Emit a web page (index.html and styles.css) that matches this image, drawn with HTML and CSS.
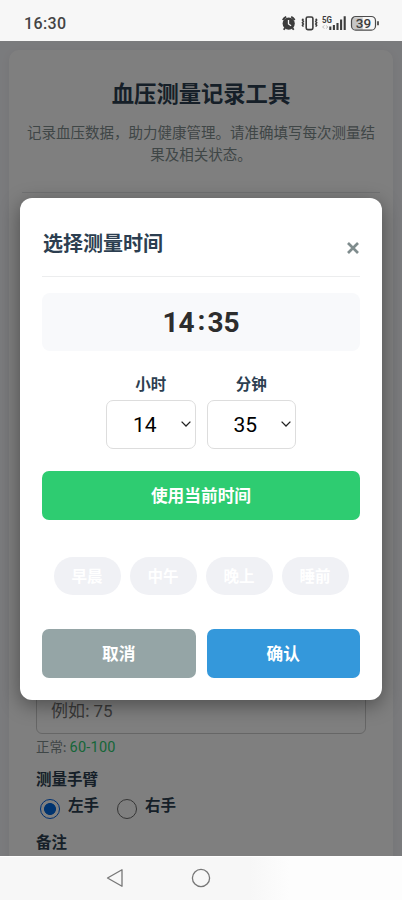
FILE: index.html
```html
<!DOCTYPE html>
<html lang="zh-CN">
<head>
<meta charset="utf-8">
<meta name="viewport" content="width=device-width, initial-scale=1">
<title>血压测量记录工具</title>
<link rel="stylesheet" href="styles.css">
</head>
<body>
<div class="phone">
  <header class="status">
    <span class="clock">16:30</span>
    <svg class="status-icons" width="98" height="18" viewBox="0 0 98 18">
      <g fill="#3c3c3c" stroke="none">
        <circle cx="7.700" cy="9.600" r="6.100"/>
        <path d="M1 5.600A7.500 7.500 0 0 1 4.700 2l1 1.300L2.300 6.600zM14.400 5.600A7.500 7.500 0 0 0 10.700 2l-1 1.300 3.400 3.300zM3.200 13.500l1.600 1.200-1.500 1.500-1.300-1zM12.200 13.500l-1.600 1.200 1.500 1.500 1.300-1z"/>
      </g>
      <path d="M7.500 6v4l2.600 1.700" fill="none" stroke="#f7f7f7" stroke-width="1.300"/>
      <rect x="25.200" y="3" width="6.700" height="12.600" rx="1.600" fill="none" stroke="#3c3c3c" stroke-width="1.600"/>
      <path d="M22.400 4.700l-1 1.300 1 1.300-1 1.400 1 1.300-1 1.300 1 1.300M34.700 4.700l1 1.300-1 1.300 1 1.400-1 1.300 1 1.300-1 1.300" fill="none" stroke="#3c3c3c" stroke-width="1.500"/>
      <text class="net" x="41" y="8.800" textLength="10" lengthAdjust="spacingAndGlyphs">5G</text>
      <path d="M43.500 11.500l-2 1.500 2 1.500M45 11.500l2 1.500-2 1.500" fill="none" stroke="#c4c4c4" stroke-width="1"/>
      <path d="M49.300 16v-3.600M52.900 16v-5M56.500 16V8.900M60.100 16V5.600M63.700 16V2.300" stroke="#3c3c3c" stroke-width="2.100"/>
      <path d="M74.700 3.200h7v12.600h-7a4 4 0 0 1-4-4V7.200a4 4 0 0 1 4-4z" fill="#c6c6c6"/>
      <rect x="70.500" y="2.500" width="24" height="13.600" rx="4.200" fill="none" stroke="#4c4c4c" stroke-width="1.200"/>
      <path d="M97 7.300v4" stroke="#4c4c4c" stroke-width="1.800"/>
      <text class="battery" x="82.500" y="13.800" text-anchor="middle">39</text>
    </svg>
  </header>

  <main class="page">
    <section class="card">
      <div class="intro">
        <h1>血压测量记录工具</h1>
        <p>记录血压数据，助力健康管理。请准确填写每次测量结果及相关状态。</p>
      </div>
      <div class="form">
        <div class="field">例如: <span>75</span></div>
        <div class="hint">正常: <span>60-100</span></div>
        <div class="label">测量手臂</div>
        <div class="radios">
          <span class="radio on"></span><span class="radio-text">左手</span>
          <span class="radio"></span><span class="radio-text">右手</span>
        </div>
        <div class="label note">备注</div>
      </div>
    </section>

    <div class="overlay">
      <div class="modal">
        <div class="modal-head">
          <h2>选择测量时间</h2>
          <svg class="close" width="12" height="12" viewBox="0 0 12 12"><path d="M1 1l10 10M11 1L1 11" stroke="#7f8c8d" stroke-width="2.700"/></svg>
        </div>
        <div class="time">14<span>:</span>35</div>
        <div class="pickers">
          <div class="picker">
            <span class="picker-label">小时</span>
            <div class="select"><span>14</span><svg width="10" height="6" viewBox="0 0 10 6"><path d="M.6.600L5 5 9.400.600" fill="none" stroke="#222" stroke-width="1.300"/></svg></div>
          </div>
          <div class="picker">
            <span class="picker-label">分钟</span>
            <div class="select"><span>35</span><svg width="10" height="6" viewBox="0 0 10 6"><path d="M.6.600L5 5 9.400.600" fill="none" stroke="#222" stroke-width="1.300"/></svg></div>
          </div>
        </div>
        <div class="btn now">使用当前时间</div>
        <div class="presets">
          <span>早晨</span><span>中午</span><span>晚上</span><span>睡前</span>
        </div>
        <div class="actions">
          <div class="btn cancel">取消</div>
          <div class="btn ok">确认</div>
        </div>
      </div>
    </div>
  </main>

  <nav class="navbar">
    <svg width="18" height="20" viewBox="0 0 18 20"><path d="M16 1.700v16.600L1.500 10z" fill="none" stroke="#777" stroke-width="1.300" stroke-linejoin="round"/></svg>
    <svg width="20" height="20" viewBox="0 0 20 20"><circle cx="10" cy="10" r="8.600" fill="none" stroke="#777" stroke-width="1.300"/></svg>
  </nav>
</div>
</body>
</html>
```
FILE: styles.css
```css
* { box-sizing: border-box; }
body {
  margin: 0;
  font-family: "Noto Sans CJK SC", sans-serif;
  color: #2c3e50;
}
h1, h2, p { margin: 0; }
.phone {
  width: 402px;
  height: 900px;
  display: flex;
  flex-direction: column;
  overflow: hidden;
}
.status {
  height: 41px;
  flex: none;
  background: #f7f7f7;
  display: flex;
  justify-content: space-between;
  align-items: center;
  padding: 6px 23px 0 24px;
}
.clock {
  font: 500 16px/20px Roboto, sans-serif;
  letter-spacing: .4px;
  color: #444;
}
.status-icons { display: block; margin-top: -1px; }
.net { font: 700 8.500px Roboto, sans-serif; fill: #3c3c3c; }
.battery { font: 500 13.500px Roboto, sans-serif; fill: #3c3c3c; }

.page {
  flex: none;
  height: 815px;
  position: relative;
  overflow: hidden;
  background: #f5f6fa;
  padding: 9px 9px 0;
}
.card {
  height: 830px;
  background: #fff;
  border-radius: 10px;
  box-shadow: 0 2px 10px rgba(0, 0, 0, .06);
  padding: 0 13px;
  display: flex;
  flex-direction: column;
}
.intro {
  height: 143px;
  padding-top: 26px;
  border-bottom: 1px solid #e2e4e6;
  text-align: center;
}
.intro h1 { font-size: 22.300px; line-height: 32px; font-weight: 700; }
.intro p {
  margin: 13px 4px 0;
  font-size: 14.500px;
  line-height: 22px;
  color: #7f8c8d;
}
.form { margin-top: 493px; padding: 0 14px; }
.field {
  height: 48px;
  border: 1px solid #ccc;
  border-radius: 6px;
  padding: 0 14px;
  font-size: 17px;
  line-height: 45px;
  color: #757575;
}
.field span { font-family: Roboto, sans-serif; }
.hint {
  margin-top: 2px;
  font-size: 13.400px;
  line-height: 20px;
  color: #7f8c8d;
}
.hint span { font: 400 14.500px/20px Roboto, sans-serif; letter-spacing: .25px; color: #2ecc71; }
.label { margin-top: 9px; font-size: 15.500px; line-height: 22px; font-weight: 700; }
.radios { display: flex; margin-top: 2px; height: 34px; padding-left: 4px; }
.radio {
  width: 20px;
  height: 20px;
  margin-top: 8px;
  border: 1.500px solid #6b6b6b;
  border-radius: 50%;
}
.radio.on {
  border-color: #0060df;
  background: radial-gradient(circle, #0068e0 5.600px, transparent 6.300px);
}
.radio-text { margin: 2px 18px 0 8px; font-size: 15.500px; line-height: 22px; font-weight: 700; }
.note { margin-top: 5px; }

.overlay {
  position: absolute;
  inset: 0;
  background: rgba(0, 0, 0, .5);
  display: flex;
  align-items: center;
  justify-content: center;
}
.modal {
  width: 362px;
  height: 502px;
  background: #fff;
  border-radius: 12px;
  box-shadow: 0 5px 20px rgba(0, 0, 0, .4);
  padding: 22px 22px 0;
}
.modal-head {
  height: 57px;
  border-bottom: 1px solid #ecedee;
  display: flex;
  justify-content: space-between;
}
.modal-head h2 { margin: 8px 0 0 1px; font-size: 20px; line-height: 30px; font-weight: 700; }
.close { margin: 22px 1px 0 0; }
.time {
  margin-top: 16px;
  height: 58px;
  border-radius: 8px;
  background: #f8f9fb;
  text-align: center;
  font: 700 28px/60px Roboto, sans-serif;
  color: #2d2d2d;
}
.time span { margin: 0 2px 0 3px; vertical-align: 2px; line-height: 1; }
.pickers { display: flex; justify-content: center; gap: 11px; margin-top: 21px; }
.picker { width: 89.500px; display: flex; flex-direction: column; align-items: center; }
.picker-label { font-size: 15.500px; line-height: 22px; font-weight: 700; }
.select {
  width: 89.500px;
  height: 49px;
  margin-top: 6px;
  border: 1px solid #ddd;
  border-radius: 7px;
  display: flex;
  align-items: center;
  justify-content: space-between;
  padding: 0 4px 0 26px;
  font: 400 21px/24px Roboto, sans-serif;
  color: #000;
}
.select span { padding-top: 2px; }
.btn {
  height: 49px;
  border-radius: 7px;
  color: #fff;
  font-size: 16.700px;
  line-height: 48px;
  font-weight: 700;
  text-align: center;
}
.now { margin-top: 22px; background: #2ecc71; }
.presets { display: flex; justify-content: center; gap: 9px; margin-top: 37px; }
.presets span {
  width: 67px;
  height: 38px;
  border-radius: 19px;
  background: #f0f1f5;
  color: #fff;
  font-size: 15.500px;
  line-height: 37px;
  font-weight: 700;
  text-align: center;
}
.actions { display: flex; gap: 11px; margin-top: 34px; }
.actions .btn { flex: 1; }
.cancel { background: #95a5a6; }
.ok { background: #3498db; }

.navbar {
  flex: 1;
  background: linear-gradient(90deg, #f7f7f7 62%, #fdfdfd 72%);
  border-top: 1px solid #fff;
  display: flex;
  gap: 67px;
  padding: 11px 0 0 106px;
}
```
